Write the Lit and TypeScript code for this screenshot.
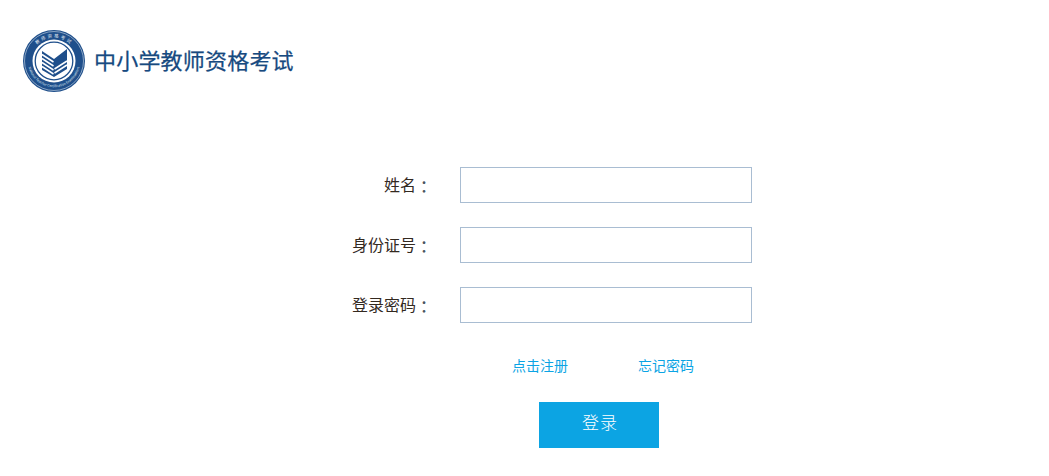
import { LitElement, html, css, svg } from "lit";
import { customElement } from "lit/decorators.js";

const logo = svg`
<svg class="emblem" viewBox="0 0 62 62" width="62" height="62" aria-hidden="true">
  <defs>
    <path id="arcTop" d="M7.500 31a23.500 23.500 0 0 1 47 0"/>
    <path id="arcBottom" d="M4.800 31a26.200 26.200 0 0 0 52.400 0"/>
  </defs>
  <circle cx="31" cy="31" r="31" fill="#1f4f8b"/>
  <circle cx="31" cy="31" r="29.500" fill="none" stroke="#cfdcea" stroke-width=".6"/>
  <circle cx="31" cy="31" r="21.500" fill="#fff"/>
  <circle cx="31" cy="31" r="18.800" fill="#fff" stroke="#1f4f8b" stroke-width="1.300"/>
  <text class="ring-cn"><textPath href="#arcTop" startOffset="50%" text-anchor="middle">教师资格考试</textPath></text>
  <text class="ring-en"><textPath href="#arcBottom" startOffset="50%" text-anchor="middle">National Teacher Certification Examinations</textPath></text>
  <path d="M19 21 31 29 44 19V39L31 47 19 40Z" fill="#1f4f8b"/>
  <path d="M19 24.500 30.500 32M19 28.500 30.500 36M19 32.500 30.500 40M19 36.500 30.500 44" stroke="#fff" stroke-width="1.500" fill="none"/>
  <path d="M31.500 39 44 31M31.500 43 44 35" stroke="#fff" stroke-width="1.500" fill="none"/>
</svg>`;

@customElement("app-root")
export class AppRoot extends LitElement {
  static styles = css`
    :host {
      display: block;
      width: 1049px;
      height: 476px;
      background: #fff;
      overflow: hidden;
      font-family: "Noto Sans CJK SC", "Liberation Sans", sans-serif;
    }
    .header {
      display: flex;
      align-items: center;
      gap: 9px;
      padding: 30px 0 0 23px;
      height: 62px;
    }
    .emblem { display: block; flex: none; }
    .ring-cn { font-size: 4.500px; fill: #e6edf5; letter-spacing: 1.800px; }
    .ring-en { font-size: 3.400px; fill: #dfe8f2; }
    .brand {
      font-size: 22px;
      line-height: 58px;
      margin-bottom: 4px;
      font-weight: 400;
      -webkit-text-stroke: .25px #174a80;
      color: #174a80;
      letter-spacing: .2px;
      white-space: nowrap;
    }
    .form {
      display: flex;
      flex-direction: column;
      gap: 24px;
      padding: 75px 0 0 300px;
    }
    .row {
      display: grid;
      grid-template-columns: 132px 292px;
      column-gap: 28px;
      align-items: center;
      height: 36px;
    }
    .label {
      font-size: 16px;
      line-height: 34px;
      padding-bottom: 2px;
      font-weight: 400;
      color: #33291f;
      text-align: right;
      white-space: nowrap;
    }
    .colon {
      font-family: "Noto Sans CJK TC", sans-serif;
      font-weight: 500;
      color: #4a5560;
      vertical-align: -2px;
      line-height: 1;
    }
    input {
      box-sizing: border-box;
      width: 292px;
      height: 36px;
      margin: 0;
      padding: 0 8px;
      border: 1px solid #a9bdd2;
      border-radius: 0;
      background: #fff;
      outline: none;
    }
    .links {
      display: flex;
      gap: 70px;
      padding: 32px 0 0 512px;
      font-size: 14px;
      line-height: 20px;
    }
    .links a { color: #0ba4e4; text-decoration: none; }
    .actions { padding: 27px 0 0 539px; }
    button {
      display: block;
      box-sizing: border-box;
      width: 120px;
      height: 46px;
      padding: 0 0 6px 2px;
      border: 0;
      border-radius: 0;
      background: #0ca4e3;
      color: #fff;
      font: 300 17px/40px "Noto Sans CJK SC", "Liberation Sans", sans-serif;
      letter-spacing: 1px;
    }
  `;

  render() {
    const rows = ["姓名", "身份证号", "登录密码"];
    return html`
      <header class="header">${logo}<span class="brand">中小学教师资格考试</span></header>
      <form class="form" @submit=${(e: Event) => e.preventDefault()}>
        ${rows.map(
          (r) => html`<div class="row"><label class="label">${r}<span class="colon">：</span></label><input type=${r === "登录密码" ? "password" : "text"} /></div>`
        )}
      </form>
      <div class="links"><a href="#">点击注册</a><a href="#">忘记密码</a></div>
      <div class="actions"><button type="button">登录</button></div>
    `;
  }
}
